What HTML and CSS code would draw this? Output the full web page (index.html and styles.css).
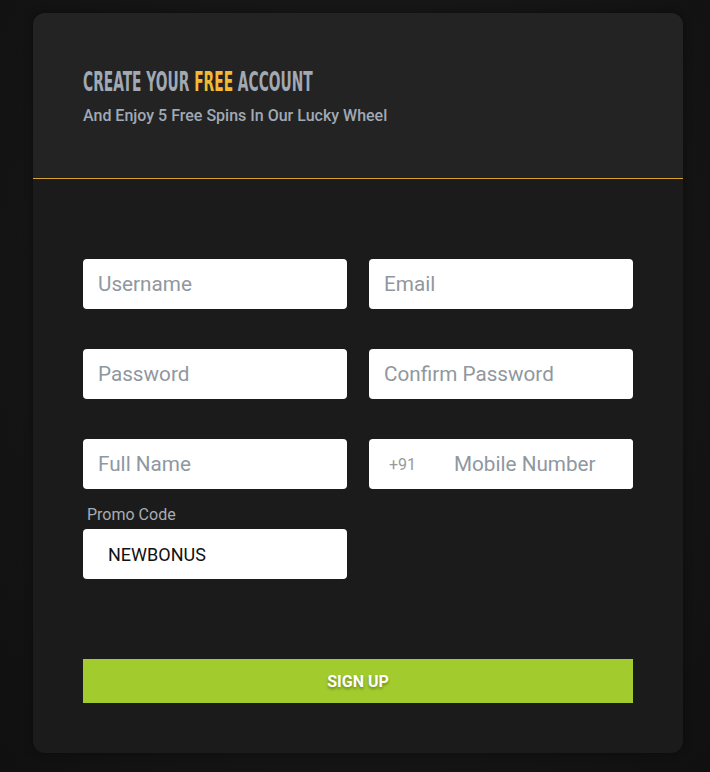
FILE: index.html
```html
<!DOCTYPE html>
<html lang="en">
<head>
  <meta charset="UTF-8">
  <title>Create Account</title>
  <meta name="viewport" content="width=device-width, initial-scale=1.0">
  <link rel="stylesheet" href="styles.css">
</head>
<body>

  <div class="signup-card">
    <header class="card-head">
      <h2><span class="squeeze">CREATE YOUR <em>FREE</em> ACCOUNT</span></h2>
      <p class="sub">And Enjoy 5 Free Spins In Our Lucky Wheel</p>
    </header>

    <form class="card-body" onsubmit="return false">
      <div class="row">
        <input type="text" placeholder="Username">
        <input type="email" placeholder="Email">
      </div>
      <div class="row">
        <input type="password" placeholder="Password">
        <input type="password" placeholder="Confirm Password">
      </div>
      <div class="row row-tight">
        <input type="text" placeholder="Full Name">
        <div class="phone">
          <span class="prefix">+91</span>
          <input type="tel" placeholder="Mobile Number">
        </div>
      </div>
      <div class="row">
        <div class="field">
          <label for="promo">Promo Code</label>
          <input type="text" id="promo" class="promo" value="NEWBONUS">
        </div>
      </div>

      <button class="btn-signup" type="submit">SIGN UP</button>
    </form>
  </div>

</body>
</html>
```

FILE: styles.css
```css
:root {
  --head-bg: #232323;
  --body-bg: #1b1b1b;
  --muted: #a0a9b4;
  --gold: #f2bb35;
  --green: #a2cc2d;
  --ph: #8f979f;
}

body {
  margin: 0;
  min-height: 772px;
  background: radial-gradient(ellipse at 50% 40%, #1c1c1c 0%, #151515 60%, #101010 100%);
  font-family: Roboto, "Liberation Sans", sans-serif;
}

.signup-card {
  width: 650px;
  margin: 13px 0 0 33px;
  border-radius: 12px;
  overflow: hidden;
  background: var(--body-bg);
  box-shadow: 0 0 8px rgba(0, 0, 0, 0.4);
}

.card-head {
  background: var(--head-bg);
  padding: 54px 50px 52px;
  border-bottom: 1px solid #d9a232;
}

h2 {
  margin: 0;
  font-family: "Liberation Sans Narrow", "DejaVu Sans Condensed", "Liberation Sans", sans-serif;
  font-weight: bold;
  font-size: 26px;
  line-height: 30px;
  color: var(--muted);
  white-space: nowrap;
}

.squeeze {
  display: inline-block;
  transform: scaleX(0.59);
  transform-origin: left center;
}

h2 em {
  font-style: normal;
  color: var(--gold);
}

.sub {
  margin: 9px 0 0;
  font-size: 16px;
  line-height: 20px;
  font-weight: 500;
  color: var(--muted);
}

.card-body {
  padding: 80px 50px 50px;
}

.row {
  display: grid;
  grid-template-columns: 264px 264px;
  column-gap: 22px;
  margin-bottom: 40px;
}

.row-tight {
  margin-bottom: 16px;
}

input {
  box-sizing: border-box;
  width: 100%;
  height: 50px;
  border: none;
  border-radius: 4px;
  background: #fff;
  padding: 0 15px;
  font-family: Roboto, "Liberation Sans", sans-serif;
  font-size: 20.7px;
  color: #111;
  outline: none;
}

input::placeholder {
  color: var(--ph);
}

.phone {
  display: flex;
  align-items: center;
  height: 50px;
  background: #fff;
  border-radius: 4px;
}

.prefix {
  flex: none;
  padding-left: 20px;
  width: 50px;
  font-size: 16px;
  color: #9a9a9a;
}

.phone input {
  padding-left: 15px;
}

label {
  display: block;
  margin: 0 0 4px 4px;
  font-size: 16px;
  line-height: 20px;
  color: #a7adb4;
}

.promo {
  padding-left: 25px;
  font-size: 18px;
}

.field {
  margin-bottom: 40px;
}

.btn-signup {
  display: block;
  width: 550px;
  height: 44px;
  border: none;
  background: var(--green);
  color: #fff;
  font-family: Roboto, "Liberation Sans", sans-serif;
  font-weight: bold;
  font-size: 16px;
  text-shadow: 0 2px 3px rgba(0, 0, 0, 0.35);
  cursor: pointer;
}
```
